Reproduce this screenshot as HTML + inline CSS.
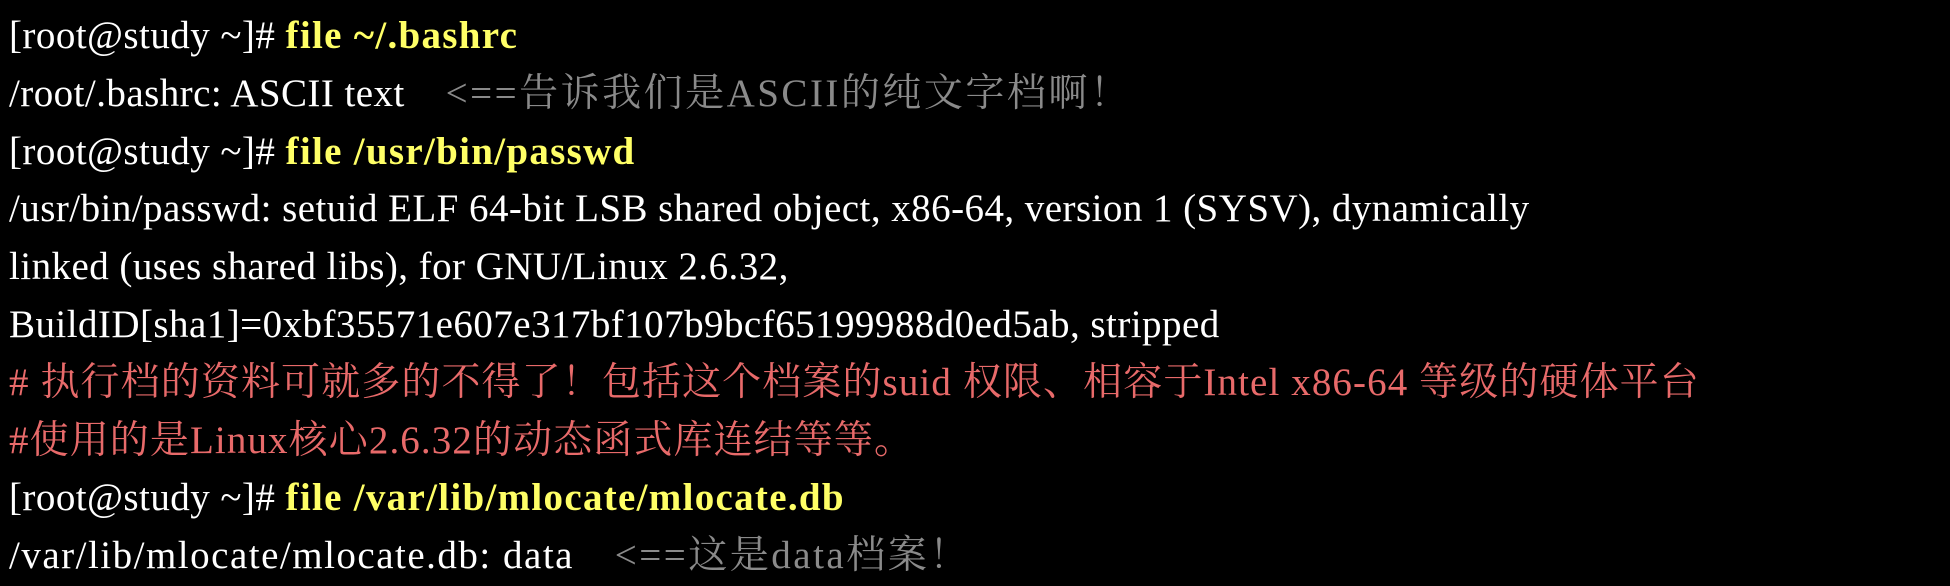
<!DOCTYPE html>
<html><head><meta charset="utf-8"><style>
html,body{margin:0;padding:0;background:#000;width:1950px;height:586px;overflow:hidden}
.w{position:absolute;left:9px;top:7px;font-family:"Liberation Serif","Noto Serif CJK SC",serif;font-size:39px;color:#fff;letter-spacing:0.45px}
.l{height:57.8px;line-height:57.8px;white-space:nowrap}
.y{color:#ffff66;font-weight:bold;letter-spacing:1.3px}
.g{color:#8a8a8a;letter-spacing:2.5px}
.r{color:#e86a6a;letter-spacing:1.1px}
</style></head><body><div class="w">
<div class="l">[root@study ~]# <span class="y">file ~/.bashrc</span></div>
<div class="l">/root/.bashrc: ASCII text &nbsp;&nbsp; <span class="g">&lt;==告诉我们是ASCII的纯文字档啊！</span></div>
<div class="l">[root@study ~]# <span class="y">file /usr/bin/passwd</span></div>
<div class="l">/usr/bin/passwd: setuid ELF 64-bit LSB shared object, x86-64, version 1 (SYSV), dynamically</div>
<div class="l">linked (uses shared libs), for GNU/Linux 2.6.32,</div>
<div class="l">BuildID[sha1]=0xbf35571e607e317bf107b9bcf65199988d0ed5ab, stripped</div>
<div class="l r"># 执行档的资料可就多的不得了！包括这个档案的suid 权限、相容于Intel x86-64 等级的硬体平台</div>
<div class="l r">#使用的是Linux核心2.6.32的动态函式库连结等等。</div>
<div class="l">[root@study ~]# <span class="y">file /var/lib/mlocate/mlocate.db</span></div>
<div class="l"><span style="letter-spacing:1.5px">/var/lib/mlocate/mlocate.db: data</span> &nbsp;&nbsp; <span class="g">&lt;==这是data档案！</span></div>
</div></body></html>
